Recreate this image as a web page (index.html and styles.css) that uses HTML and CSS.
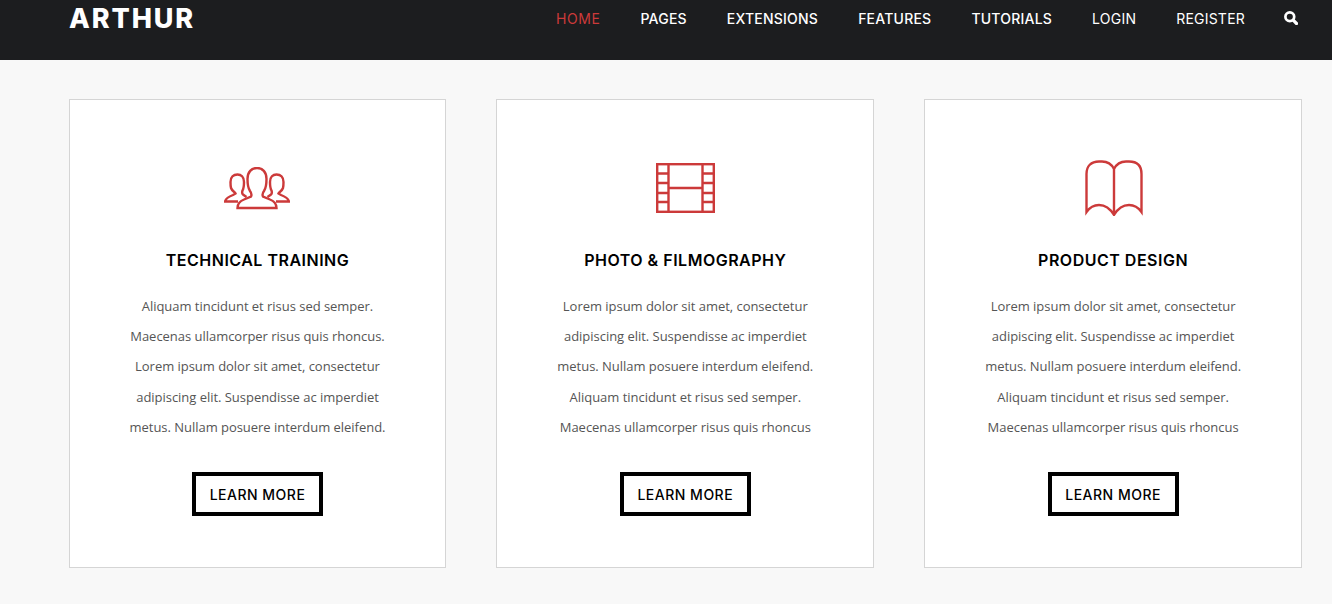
FILE: index.html
```html
<!DOCTYPE html>
<html lang="en">
<head>
<meta charset="utf-8">
<title>Arthur</title>
<link rel="stylesheet" href="styles.css">
</head>
<body>
<header class="topbar">
  <a class="logo" href="#">ARTHUR</a>
  <nav class="nav">
    <a class="nav-link is-active" href="#">HOME</a>
    <a class="nav-link" href="#">PAGES</a>
    <a class="nav-link" href="#">EXTENSIONS</a>
    <a class="nav-link" href="#">FEATURES</a>
    <a class="nav-link" href="#">TUTORIALS</a>
    <a class="nav-link is-light" href="#">LOGIN</a>
    <a class="nav-link is-light" href="#">REGISTER</a>
    <a class="nav-search" href="#" aria-label="Search">
      <svg width="14" height="14" viewBox="0 0 14 14"><circle cx="5.800" cy="5.800" r="4.400" fill="none" stroke="#fff" stroke-width="2.700"/><path d="M9.200 9.200 12.500 12.500" stroke="#fff" stroke-width="3.200" stroke-linecap="round"/></svg>
    </a>
  </nav>
</header>
<main class="cards">
  <article class="card">
    <div class="card-icon">
      <svg width="66" height="43" viewBox="0 0 66 43" fill="none" stroke="#cc3a3a" stroke-width="2.400">
        <path d="M13.500 41C13.500 36 16 34 20 32.500L27 29.500C28 27.500 27.500 26 26 24C24 21 23.500 17 23.500 12C23.500 5 27.500 1 33 1C38.500 1 42.500 5 42.500 12C42.500 17 42 21 40 24C38.500 26 38 27.500 39 29.500L46 32.500C50 34 52.500 36 52.500 41Z"/>
        <path d="M14 34.500H1C2 31 5 29.500 9 28L11.500 26.500C11 25 8 24 7 21C6.500 19 6.500 17 6.500 15C6.500 10 9.500 7.500 13.500 7.500C17 7.500 20 10 20 15C20 18 20 21 18.500 23.500C18 25 18 26.500 19 27.500L22.500 30"/>
        <path d="M52 34.500H65C64 31 61 29.500 57 28L54.500 26.500C55 25 58 24 59 21C59.500 19 59.500 17 59.500 15C59.500 10 56.500 7.500 52.500 7.500C49 7.500 46 10 46 15C46 18 46 21 47.500 23.500C48 25 48 26.500 47 27.500L43.500 30"/>
      </svg>
    </div>
    <h2 class="card-title">TECHNICAL TRAINING</h2>
    <p class="card-text">Aliquam tincidunt et risus sed semper.<br>Maecenas ullamcorper risus quis rhoncus.<br>Lorem ipsum dolor sit amet, consectetur<br>adipiscing elit. Suspendisse ac imperdiet<br>metus. Nullam posuere interdum eleifend.</p>
    <a class="card-btn" href="#">LEARN MORE</a>
  </article>
  <article class="card">
    <div class="card-icon">
      <svg width="59" height="50" viewBox="0 0 59 50" fill="none" stroke="#cc3a3a" stroke-width="2.400">
        <rect x="1.200" y="1.200" width="56.600" height="47.600"/>
        <path d="M12.500 1V49M46.500 1V49M12.500 25H46.500M1 10.500H12.500M1 20H12.500M1 30H12.500M1 39H12.500M46.500 10.500H58M46.500 20H58M46.500 30H58M46.500 39H58"/>
      </svg>
    </div>
    <h2 class="card-title">PHOTO &amp; FILMOGRAPHY</h2>
    <p class="card-text">Lorem ipsum dolor sit amet, consectetur<br>adipiscing elit. Suspendisse ac imperdiet<br>metus. Nullam posuere interdum eleifend.<br>Aliquam tincidunt et risus sed semper.<br>Maecenas ullamcorper risus quis rhoncus</p>
    <a class="card-btn" href="#">LEARN MORE</a>
  </article>
  <article class="card">
    <div class="card-icon">
      <svg class="icon-book" width="58" height="56" viewBox="0 0 58 56" fill="none" stroke="#cc3a3a" stroke-width="2.400">
        <path d="M1.500 52V14C1.500 6 6 1.500 14 1.500H17C23 1.500 27 5 29 9C31 5 35 1.500 41 1.500H44C52 1.500 56.500 6 56.500 14V52C53 47 49 45 44 45C37 45 32 50 29 55C26 50 21 45 14 45C9 45 5 47 1.500 52ZM29 9V55"/>
      </svg>
    </div>
    <h2 class="card-title">PRODUCT DESIGN</h2>
    <p class="card-text">Lorem ipsum dolor sit amet, consectetur<br>adipiscing elit. Suspendisse ac imperdiet<br>metus. Nullam posuere interdum eleifend.<br>Aliquam tincidunt et risus sed semper.<br>Maecenas ullamcorper risus quis rhoncus</p>
    <a class="card-btn" href="#">LEARN MORE</a>
  </article>
</main>
</body>
</html>
```
FILE: styles.css
```css
* { box-sizing: border-box; }

html, body {
  margin: 0;
  height: 100%;
  overflow: hidden;
}

body {
  background: #f8f8f8;
  font-family: "Open Sans", "Liberation Sans", sans-serif;
  color: #555;
}

a { text-decoration: none; }

.topbar {
  height: 60px;
  background: #1c1d1f;
  display: flex;
  justify-content: space-between;
  align-items: flex-start;
  padding: 0 34px 0 69px;
}

.logo {
  color: #fff;
  font-family: Inter, "Liberation Sans", sans-serif;
  font-size: 27px;
  font-weight: 800;
  line-height: 38px;
  letter-spacing: 1.9px;
}

.nav {
  display: flex;
  align-items: flex-start;
  gap: 40px;
}

.nav-link {
  color: #fff;
  font-family: Inter, "Liberation Sans", sans-serif;
  font-size: 14px;
  font-weight: 500;
  line-height: 38px;
  letter-spacing: 0.22px;
}

.nav-link.is-active { color: #cc3a3a; font-weight: 400; letter-spacing: 0.6px; }
.nav-link.is-light { font-weight: 400; }

.nav-search {
  display: block;
  height: 14px;
  margin-top: 10.500px;
  margin-left: -1px;
}

.nav-search svg { display: block; }

.cards {
  display: grid;
  grid-template-columns: repeat(3, 1fr);
  gap: 50px;
  padding: 39px 30px 0 68.600px;
}

.card {
  height: 469px;
  background: #fff;
  border: 1px solid #d5d5d5;
  display: flex;
  flex-direction: column;
  align-items: center;
  padding-top: 59px;
}

.card-icon {
  height: 58px;
  display: flex;
  align-items: center;
  justify-content: center;
}

.card-icon svg { display: block; }
.icon-book { margin-left: 2px; }

.card-title {
  margin: 32px 0 0;
  color: #000;
  font-family: Inter, "Liberation Sans", sans-serif;
  font-size: 16px;
  font-weight: 600;
  line-height: 22px;
  letter-spacing: 0.5px;
}

.card-text {
  margin: 19.750px 0 0;
  font-size: 13px;
  line-height: 30.25px;
  letter-spacing: -0.03px;
  text-align: center;
}

.card-btn {
  margin-top: 30.250px;
  width: 131px;
  height: 44px;
  border: 4px solid #000;
  color: #000;
  font-family: Inter, "Liberation Sans", sans-serif;
  font-size: 14px;
  font-weight: 500;
  letter-spacing: 0.5px;
  display: flex;
  align-items: center;
  justify-content: center;
}
```
